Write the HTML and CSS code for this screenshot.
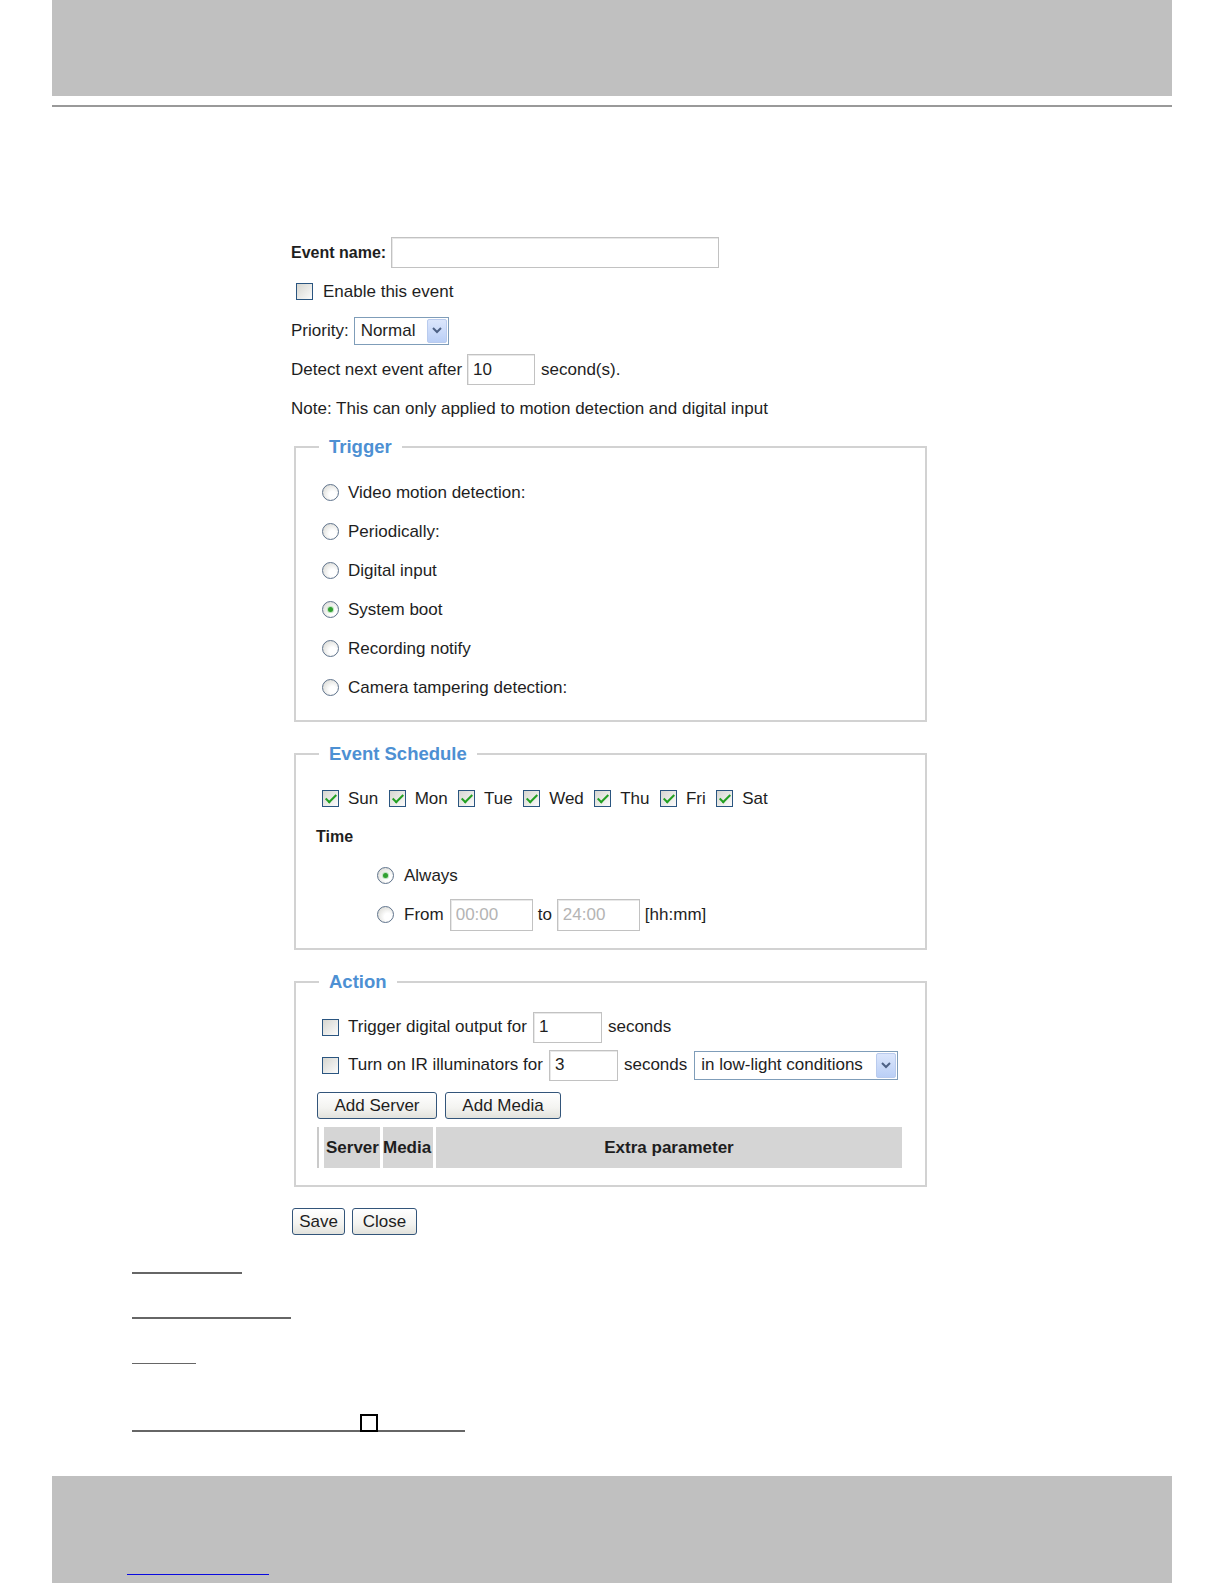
FILE: index.html
```html
<!DOCTYPE html>
<html lang="en">
<head>
  <meta charset="UTF-8">
  <title>Event Settings</title>
  <link rel="stylesheet" href="styles.css">
</head>
<body>
  <div class="topbar"></div>
  <div class="rule"></div>

  <form class="event-form">
    <div class="row">
      <label class="strong" for="event_name">Event name:</label>
      <input id="event_name" class="text name" type="text">
    </div>
    <div class="row indent">
      <label class="check"><input type="checkbox">Enable this event</label>
    </div>
    <div class="row">
      Priority:
      <span class="select prio"><span>Normal</span><span class="drop"><svg width="10" height="7" viewBox="0 0 10 7"><path d="M1 1 L5 5 L9 1" fill="none" stroke="#4d6185" stroke-width="2"/></svg></span></span>
    </div>
    <div class="row">
      Detect next event after
      <input class="text short" type="text" value="10">
      <span class="after">second(s).</span>
    </div>
    <div class="row">Note: This can only applied to motion detection and digital input</div>

    <fieldset class="box trigger">
      <legend>Trigger</legend>
      <label class="opt"><input type="radio" name="trigger">Video motion detection:</label>
      <label class="opt"><input type="radio" name="trigger">Periodically:</label>
      <label class="opt"><input type="radio" name="trigger">Digital input</label>
      <label class="opt"><input type="radio" name="trigger" checked>System boot</label>
      <label class="opt"><input type="radio" name="trigger">Recording notify</label>
      <label class="opt"><input type="radio" name="trigger">Camera tampering detection:</label>
    </fieldset>

    <fieldset class="box schedule">
      <legend>Event Schedule</legend>
      <div class="opt days">
        <label class="check"><input type="checkbox" checked>Sun</label>
        <label class="check"><input type="checkbox" checked>Mon</label>
        <label class="check"><input type="checkbox" checked>Tue</label>
        <label class="check"><input type="checkbox" checked>Wed</label>
        <label class="check"><input type="checkbox" checked>Thu</label>
        <label class="check"><input type="checkbox" checked>Fri</label>
        <label class="check"><input type="checkbox" checked>Sat</label>
      </div>
      <div class="time-title">Time</div>
      <div class="time-opts">
        <label class="opt always"><input type="radio" name="time" checked>Always</label>
        <div class="opt range">
          <label class="check"><input type="radio" name="time">From</label>
          <input class="text hhmm" type="text" value="00:00" disabled>
          <span>to</span>
          <input class="text hhmm" type="text" value="24:00" disabled>
          <span>[hh:mm]</span>
        </div>
      </div>
    </fieldset>

    <fieldset class="box action">
      <legend>Action</legend>
      <div class="opt">
        <label class="check"><input type="checkbox">Trigger digital output for</label>
        <input class="text secs" type="text" value="1">
        <span>seconds</span>
      </div>
      <div class="opt">
        <label class="check"><input type="checkbox">Turn on IR illuminators for</label>
        <input class="text secs" type="text" value="3">
        <span>seconds</span>
        <span class="select light"><span>in low-light conditions</span><span class="drop"><svg width="10" height="7" viewBox="0 0 10 7"><path d="M1 1 L5 5 L9 1" fill="none" stroke="#4d6185" stroke-width="2"/></svg></span></span>
      </div>
      <div class="btns">
        <button type="button" class="btn add-server">Add Server</button>
        <button type="button" class="btn add-media">Add Media</button>
      </div>
      <div class="servers">
        <div class="cell c-server">Server</div>
        <div class="cell c-media">Media</div>
        <div class="cell c-extra">Extra parameter</div>
      </div>
    </fieldset>

    <div class="save-row">
      <button type="button" class="btn save">Save</button>
      <button type="button" class="btn close">Close</button>
    </div>
  </form>

  <div class="marks">
    <div class="mark m1"></div>
    <div class="mark m2"></div>
    <div class="mark m3"></div>
    <div class="mark m4"><div class="sq"></div></div>
  </div>

  <div class="footbar"><span class="footlink"></span></div>
</body>
</html>
```

FILE: styles.css
```css
body {
  margin: 0;
  background: #fff;
  font-family: "Liberation Sans", Arial, sans-serif;
  font-size: 17px;
  color: #1e1e1e;
}
.topbar {
  margin: 0 52px;
  height: 96px;
  background: #c0c0c0;
}
.rule {
  margin: 9px 52px 0;
  height: 2px;
  background: #999;
}

.event-form {
  margin: 126px 0 0 291px;
  width: 660px;
}
.row {
  display: flex;
  align-items: center;
  gap: 5px;
  height: 39px;
}
.row.indent {
  padding-left: 5px;
}
.strong {
  font-weight: bold;
  font-size: 16px;
}
.after {
  margin-left: 1px;
}

/* text inputs */
.text {
  box-sizing: border-box;
  margin: 0;
  padding: 0 5px;
  font: inherit;
  color: #1e1e1e;
  border: 1px solid #c2c2c2;
  box-shadow: inset 1px 1px 0 #e8e8e8;
  background: #fff;
}
.text.name { width: 328px; height: 31px; }
.text.short { width: 68px; height: 31px; }
.text.hhmm { width: 83px; height: 32px; }
.text.secs { width: 69px; height: 31px; }
.text:disabled { color: #b4b4b4; }

/* select look-alike */
.select {
  box-sizing: border-box;
  display: inline-flex;
  align-items: center;
  justify-content: space-between;
  border: 1px solid #7f9db9;
  background: #fff;
  padding: 1px 1px 1px 6px;
}
.select.prio { width: 95px; height: 28px; }
.select.light { width: 204px; height: 29px; margin-left: 1px; }
.drop {
  display: flex;
  align-items: center;
  justify-content: center;
  width: 20px;
  align-self: stretch;
  border: 1px solid #b9cbee;
  border-radius: 2px;
  background: linear-gradient(#dbe6fc, #bacff6);
  box-sizing: border-box;
}

/* checkboxes and radios */
input[type=checkbox],
input[type=radio] {
  appearance: none;
  -webkit-appearance: none;
  box-sizing: border-box;
  width: 17px;
  height: 17px;
  margin: 0;
  position: relative;
  flex: none;
}
input[type=checkbox] {
  border: 1px solid #2a5580;
  background: linear-gradient(135deg, #d6d6d0, #fbfbfb);
}
input[type=checkbox]:checked::after {
  content: "";
  position: absolute;
  left: 5px;
  top: 1px;
  width: 4px;
  height: 9px;
  border: solid #22a022;
  border-width: 0 2px 2px 0;
  transform: rotate(45deg);
}
input[type=radio] {
  border-radius: 50%;
  border: 1px solid #5f738c;
  background: radial-gradient(circle at 65% 65%, #fff 25%, #d2d2cc 100%);
}
input[type=radio]:checked::after {
  content: "";
  position: absolute;
  left: 5px;
  top: 5px;
  width: 5px;
  height: 5px;
  border-radius: 50%;
  background: #30a030;
  box-shadow: 0 0 1px 1px #b8e0b8;
}
.check {
  display: inline-flex;
  align-items: center;
  gap: 10px;
}

/* fieldsets */
.box {
  box-sizing: border-box;
  width: 633px;
  margin: 0 0 0 3px;
  padding: 0 0 13px 20px;
  border: 2px solid #d2d2d2;
  min-width: 0;
}
.box legend {
  margin-left: 3px;
  padding: 0 10px;
  font-size: 18.5px;
  line-height: 22px;
  font-weight: bold;
  color: #4d90d3;
}
.opt {
  display: flex;
  align-items: center;
  gap: 9px;
  height: 39px;
  padding-left: 6px;
}
.trigger {
  margin-top: 8px;
  padding-top: 15px;
}
.schedule {
  margin-top: 21px;
  padding-top: 14px;
  padding-bottom: 14px;
}
.days {
  gap: 0;
}
.days .check {
  gap: 9px;
  margin-right: 10.4px;
}
.time-title {
  height: 38px;
  line-height: 38px;
  font-weight: bold;
  font-size: 16px;
}
.time-opts {
  margin-left: 55px;
}
.time-opts .always {
  gap: 10px;
}
.time-opts .range {
  gap: 5px;
}
.time-opts .check {
  margin-right: 1px;
}
.action {
  margin-top: 21px;
  padding-top: 15px;
  padding-bottom: 17px;
}
.action .opt {
  height: 38px;
  gap: 6px;
}
.action .check {
  gap: 9px;
}

/* buttons */
.btn {
  box-sizing: border-box;
  margin: 0;
  padding: 0;
  font: inherit;
  color: #1e1e1e;
  border: 1px solid #33557a;
  border-radius: 3px;
  background: linear-gradient(#ffffff, #f3f3f0 60%, #e2e2dc);
  cursor: pointer;
}
.btns {
  display: flex;
  gap: 8px;
  margin-top: 8px;
  padding-left: 1px;
}
.add-server { width: 120px; height: 27px; }
.add-media { width: 116px; height: 27px; }

.servers {
  display: flex;
  gap: 3px;
  margin: 8px 0 0 1px;
  width: 585px;
  height: 41px;
  border-left: 2px solid #cacaca;
  padding-left: 5px;
  box-sizing: border-box;
}
.cell {
  display: flex;
  align-items: center;
  background: #d5d5d5;
  font-weight: bold;
}
.c-server { width: 56px; padding-left: 2px; box-sizing: border-box; }
.c-media { width: 50px; }
.c-extra { flex: 1; justify-content: center; }

.save-row {
  display: flex;
  gap: 7px;
  margin: 21px 0 0 1px;
}
.save { width: 53px; height: 27px; }
.close { width: 65px; height: 27px; }

/* rules below the form */
.marks {
  margin-left: 132px;
}
.mark {
  background: #666;
  height: 2px;
}
.m1 { width: 110px; margin-top: 37px; }
.m2 { width: 159px; margin-top: 43px; }
.m3 { width: 64px; margin-top: 44px; height: 1px; }
.m4 {
  width: 333px;
  margin-top: 50px;
  height: 16px;
  background: none;
  border-bottom: 2px solid #666;
}
.sq {
  box-sizing: border-box;
  width: 18px;
  height: 18px;
  margin-left: 228px;
  border: 2px solid #000;
  background: #fff;
}

.footbar {
  margin: 44px 52px 0;
  height: 107px;
  background: #c0c0c0;
}
.footlink {
  display: block;
  margin-left: 75px;
  padding-top: 98px;
  width: 142px;
  border-bottom: 1px solid #0a0ae0;
}
```
